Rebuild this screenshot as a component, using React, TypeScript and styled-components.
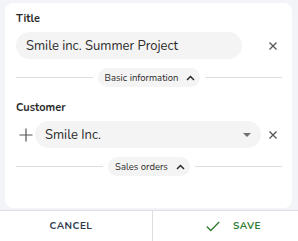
import React from 'react';
import styled, { createGlobalStyle } from 'styled-components';

const GlobalStyle = createGlobalStyle`
  html, body {
    margin: 0;
    padding: 0;
    height: 100%;
  }
  body {
    font-family: "Nunito", "Lato", "Noto Sans", sans-serif;
    background: #f3f4f8;
  }
  #root {
    height: 100%;
  }
`;

const Page = styled.div`
  height: 100vh;
  display: flex;
  flex-direction: column;
  box-sizing: border-box;
`;

const Card = styled.div`
  flex: 1;
  margin: 3px 6px 2px 5px;
  background: #ffffff;
  border-radius: 8px;
  padding: 9px 10px 0 11px;
  display: flex;
  flex-direction: column;
`;

const Label = styled.div<{ top?: number }>`
  font-size: 11px;
  line-height: 14px;
  font-weight: 700;
  color: #2b2b2b;
  margin-top: ${({ top }) => top ?? 0}px;
`;

const FieldRow = styled.div`
  display: flex;
  align-items: center;
  margin-top: 6px;
`;

const TextField = styled.div<{ trail: number }>`
  flex: 1;
  height: 27px;
  border-radius: 14px;
  background: #f4f4f4;
  display: flex;
  align-items: center;
  padding: 0 10px;
  margin-right: ${({ trail }) => trail}px;
  font-size: 13px;
  color: #2b2b2b;
`;

const Value = styled.span`
  flex: 1;
`;

const IconButton = styled.div<{ w: number }>`
  width: ${({ w }) => w}px;
  height: 27px;
  display: flex;
  align-items: center;
  justify-content: center;
  flex-shrink: 0;
`;

const Divider = styled.div<{ top: number }>`
  display: flex;
  align-items: center;
  gap: 5px;
  margin-top: ${({ top }) => top}px;
  &::before,
  &::after {
    content: '';
    flex: 1;
    height: 1px;
    background: #dedede;
  }
`;

const SectionPill = styled.div`
  height: 19px;
  border-radius: 10px;
  background: #f4f4f4;
  display: flex;
  align-items: center;
  gap: 8px;
  padding: 0 5px 0 7px;
  font-size: 9.5px;
  color: #2b2b2b;
`;

const Footer = styled.div`
  height: 30px;
  border-top: 1px solid #dedede;
  background: #ffffff;
  display: grid;
  grid-template-columns: 152px 1fr;
`;

const FooterButton = styled.div<{ shift: number; color: string; divider?: boolean }>`
  display: flex;
  align-items: center;
  justify-content: center;
  gap: 13px;
  padding-left: ${({ shift }) => (shift > 0 ? shift : 0)}px;
  padding-right: ${({ shift }) => (shift < 0 ? -shift : 0)}px;
  border-left: ${({ divider }) => (divider ? '1px solid #dedede' : 'none')};
  font-size: 10px;
  font-weight: 700;
  letter-spacing: 0.5px;
  color: ${({ color }) => color};
`;

const CloseIcon = () => (
  <svg width="8" height="8" viewBox="0 0 8 8">
    <path d="M0.5 0.5 L7.5 7.5 M7.5 0.5 L0.5 7.5" stroke="#555" strokeWidth="1.3" fill="none" />
  </svg>
);

const ChevronUp = () => (
  <svg width="9" height="6" viewBox="0 0 9 6">
    <path d="M1 5 L4.5 1.5 L8 5" stroke="#2b2b2b" strokeWidth="1.5" fill="none" />
  </svg>
);

const PlusIcon = () => (
  <svg width="14" height="14" viewBox="0 0 14 14">
    <path d="M7 0.5 V13.5 M0.5 7 H13.5" stroke="#555" strokeWidth="1.2" fill="none" />
  </svg>
);

const CaretDown = () => (
  <svg width="8" height="4" viewBox="0 0 8 4">
    <path d="M0 0 H8 L4 4 Z" fill="#707070" />
  </svg>
);

const CheckIcon = () => (
  <svg width="14" height="11" viewBox="0 0 14 11">
    <path d="M0.8 5.5 L4.8 9.5 L13.2 1" stroke="#2e7d32" strokeWidth="1.3" fill="none" />
  </svg>
);

const App = () => {
  return (
    <>
      <GlobalStyle />
      <Page>
        <Card>
          <Label>Title</Label>
          <FieldRow>
            <TextField trail={22}>
              <Value>Smile inc. Summer Project</Value>
            </TextField>
            <IconButton w={18}>
              <CloseIcon />
            </IconButton>
          </FieldRow>
          <Divider top={9}>
            <SectionPill>
              Basic information
              <ChevronUp />
            </SectionPill>
          </Divider>

          <Label top={14}>Customer</Label>
          <FieldRow>
            <IconButton w={19}>
              <PlusIcon />
            </IconButton>
            <TextField trail={3}>
              <Value>Smile Inc.</Value>
              <CaretDown />
            </TextField>
            <IconButton w={18}>
              <CloseIcon />
            </IconButton>
          </FieldRow>
          <Divider top={9}>
            <SectionPill>
              Sales orders
              <ChevronUp />
            </SectionPill>
          </Divider>
        </Card>
        <Footer>
          <FooterButton shift={-10} color="#2d3a4a">
            CANCEL
          </FooterButton>
          <FooterButton shift={16} color="#2e7d32" divider>
            <CheckIcon />
            SAVE
          </FooterButton>
        </Footer>
      </Page>
    </>
  );
};

export default App;
